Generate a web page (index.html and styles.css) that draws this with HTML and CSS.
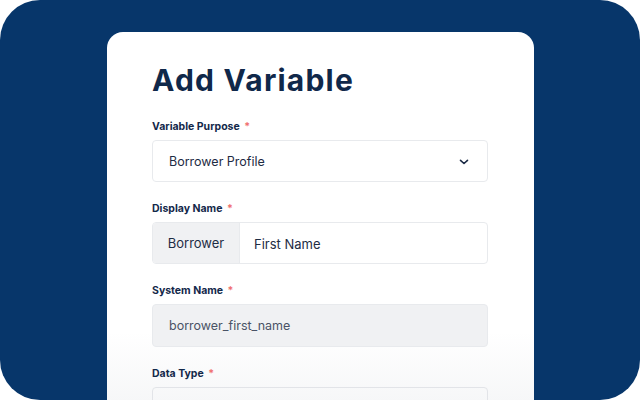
FILE: index.html
```html
<!DOCTYPE html>
<html>
<head>
<meta charset="utf-8">
<link rel="stylesheet" href="styles.css">
</head>
<body>
<div class="frame">
  <div class="card">
    <h1 class="title">Add Variable</h1>
    <div class="field">
      <label class="label">Variable Purpose <span class="req">*</span></label>
      <div class="select">
        <span>Borrower Profile</span>
        <svg class="chev" width="10" height="6" viewBox="0 0 10 6"><path d="M1.5 1.3l3.5 3.2 3.5-3.2" fill="none" stroke="#1b2b45" stroke-width="1.6" stroke-linecap="round" stroke-linejoin="round"/></svg>
      </div>
    </div>
    <div class="field">
      <label class="label">Display Name <span class="req">*</span></label>
      <div class="group">
        <div class="prefix">Borrower</div>
        <div class="gin">First Name</div>
      </div>
    </div>
    <div class="field">
      <label class="label">System Name <span class="req">*</span></label>
      <div class="input disabled">borrower_first_name</div>
    </div>
    <div class="field">
      <label class="label">Data Type <span class="req">*</span></label>
      <div class="input blank"></div>
    </div>
  </div>
</div>
</body>
</html>
```
FILE: styles.css
```css
* { box-sizing: border-box; }
html, body { margin: 0; background: #ffffff; }
body { font-family: "Inter", "Liberation Sans", sans-serif; }
.frame {
  width: 640px;
  height: 400px;
  background: #07366a;
  border-radius: 40px;
  overflow: hidden;
  padding: 32px 0 0 107px;
}
.card {
  width: 427px;
  height: 420px;
  background: linear-gradient(to bottom, #ffffff 0, #ffffff 300px, #f6f7f8 370px, #f3f4f6 100%);
  border-radius: 16px 16px 0 0;
  padding: 30px 46px 0 45px;
}
.title {
  margin: 0 0 22px;
  font-size: 30px;
  line-height: 36px;
  font-weight: 700;
  color: #10284a;
  letter-spacing: 1.2px;
}
.field { margin-bottom: 20px; }
.label {
  display: block;
  font-size: 10.5px;
  line-height: 14px;
  font-weight: 700;
  color: #13284a;
  margin-bottom: 6px;
}
.req { color: #f07070; margin-left: 2px; }
.select, .input, .group {
  height: 42px;
  border: 1px solid #e8eaed;
  border-radius: 4px;
  font-size: 12.5px;
  color: #1e2c44;
  background: #ffffff;
}
.select {
  display: flex;
  align-items: center;
  justify-content: space-between;
  padding: 0 18px 0 16px;
}
.chev { margin-top: 1px; }
.group { display: flex; overflow: hidden; }
.prefix {
  width: 87px;
  background: #f0f1f3;
  display: flex;
  align-items: center;
  justify-content: center;
  border-right: 1px solid #e8eaed;
  font-size: 13px;
}
.gin {
  display: flex;
  align-items: center;
  padding-left: 14px;
  padding-top: 2px;
  font-size: 13px;
}
.input {
  display: flex;
  align-items: center;
  padding-left: 16px;
}
.disabled { background: #f0f1f3; color: #4a5366; height: 43px; }
.blank { background: transparent; border-color: #e2e4e8; }
```
